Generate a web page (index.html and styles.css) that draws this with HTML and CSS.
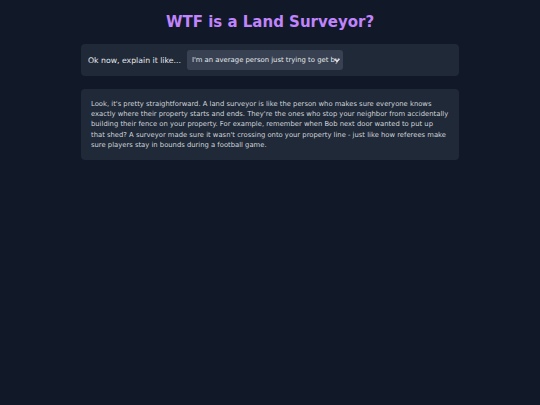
FILE: index.html
```html
<!DOCTYPE html>
<html>
<head>
<meta charset="utf-8">
<link rel="stylesheet" href="styles.css">
</head>
<body>
<main class="page">
  <h1 class="title">WTF is a Land Surveyor?</h1>
  <div class="card picker">
    <span class="label">Ok now, explain it like...</span>
    <div class="select">
      <span class="select-text">I'm an average person just trying to get by</span>
      <svg class="chevron" width="8" height="8" viewBox="0 0 8 8"><path d="M1.5 3 L4 5.5 L6.5 3" fill="none" stroke="#e5e7eb" stroke-width="1.2"/></svg>
    </div>
  </div>
  <div class="card answer">
    <p class="answer-text">Look, it's pretty straightforward. A land surveyor is like the person who makes sure everyone knows<br>exactly where their property starts and ends. They're the ones who stop your neighbor from accidentally<br>building their fence on your property. For example, remember when Bob next door wanted to put up<br>that shed? A surveyor made sure it wasn't crossing onto your property line - just like how referees make<br>sure players stay in bounds during a football game.</p>
  </div>
</main>
</body>
</html>
```
FILE: styles.css
```css
html, body {
  margin: 0;
  padding: 0;
  background: #111827;
  font-family: "DejaVu Sans", sans-serif;
}
.page {
  width: 378px;
  margin: 0 auto;
  padding-top: 12px;
}
.title {
  margin: 0 0 12px;
  text-align: center;
  font-size: 15px;
  line-height: 20px;
  font-weight: bold;
  color: #c084fc;
}
.card {
  background: #1f2937;
  border-radius: 4px;
}
.picker {
  display: flex;
  align-items: center;
  gap: 6px;
  padding: 6px 7px;
  height: 20px;
}
.label {
  font-size: 7.75px;
  color: #e5e7eb;
}
.select {
  position: relative;
  width: 156px;
  height: 20px;
  box-sizing: border-box;
  background: #374151;
  border-radius: 3px;
  padding: 0 5px;
  display: flex;
  align-items: center;
  overflow: hidden;
}
.select-text {
  font-size: 6.85px;
  color: #e5e7eb;
  white-space: nowrap;
}
.chevron {
  position: absolute;
  right: 2px;
  top: 6px;
}
.answer {
  margin-top: 13px;
  padding: 10px 8px 10px 10px;
}
.answer-text {
  margin: 0;
  font-size: 6.8px;
  line-height: 10.2px;
  color: #d1d5db;
}
```
